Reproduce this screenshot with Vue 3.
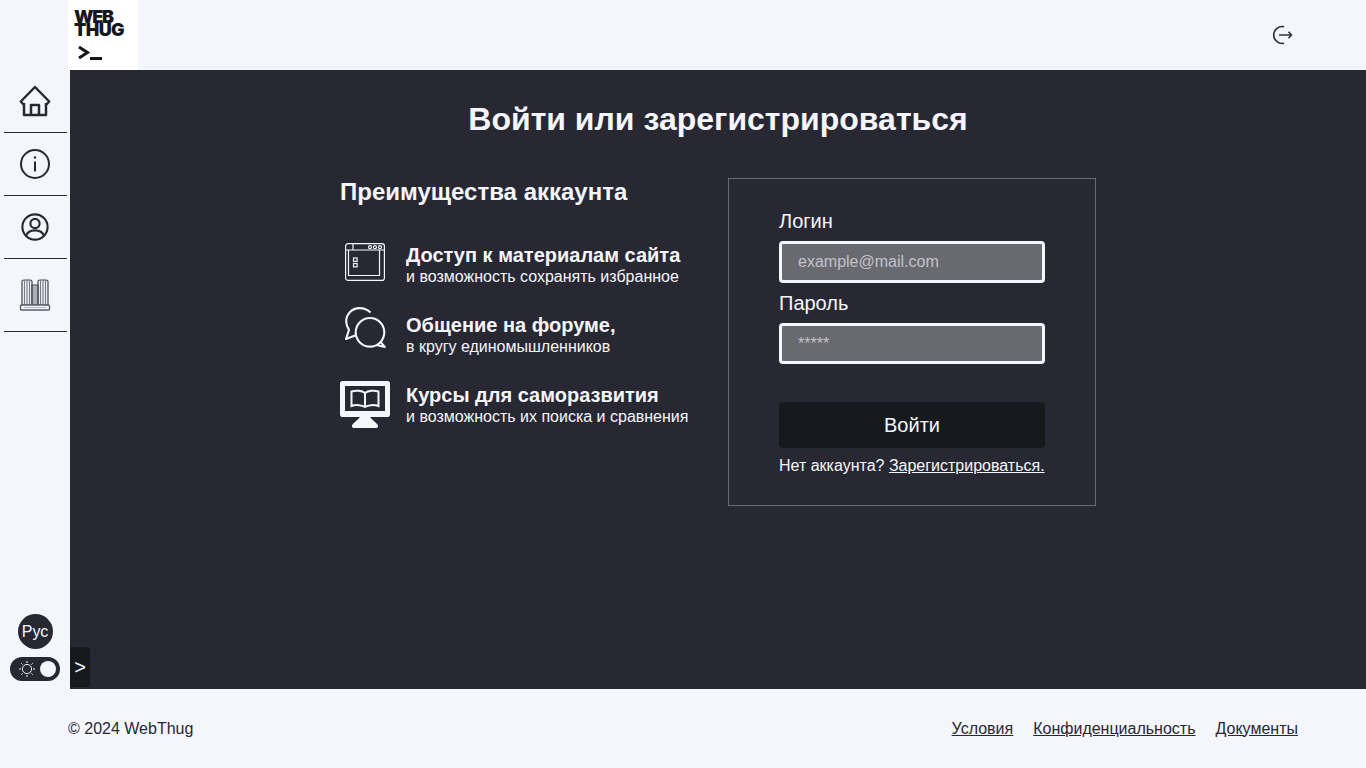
<script setup>
const benefits = [
  { title: 'Доступ к материалам сайта', text: 'и возможность сохранять избранное', icon: 'site' },
  { title: 'Общение на форуме,', text: 'в кругу единомышленников', icon: 'chat' },
  { title: 'Курсы для саморазвития', text: 'и возможность их поиска и сравнения', icon: 'book' }
]
</script>

<template>
  <div class="page">
    <header class="header">
      <div class="logo">
        <div class="logo-word web">WEB</div>
        <div class="logo-word thug">THUG</div>
        <svg class="logo-prompt" width="26" height="16" viewBox="0 0 26 16">
          <path d="M1 2 9.500 7.500 1 13" fill="none" stroke="#15171c" stroke-width="3"/>
          <path d="M12 13.500H24" stroke="#15171c" stroke-width="3"/>
        </svg>
      </div>
      <svg class="logout" width="22" height="22" viewBox="0 0 22 22" fill="none" stroke="#33333e" stroke-width="1.600">
        <path d="M12.500 2.600A8.500 8.500 0 1 0 12.500 19.400" stroke-linecap="round"/>
        <path d="M8 11H20.500M17.500 7.800 20.500 11 17.500 14.200"/>
      </svg>
    </header>

    <div class="middle">
      <aside class="sidebar">
        <nav class="nav">
          <div class="nav-item">
            <svg width="32" height="32" viewBox="0 0 32 32" fill="none" stroke="#282833" stroke-width="2.500">
              <path d="M5 20 1.800 16.500 16 2 30.200 16.500 27 20M5 18V30H27V18M12 30V20H20V30" stroke-linejoin="round"/>
            </svg>
          </div>
          <div class="nav-item">
            <svg width="32" height="32" viewBox="0 0 32 32" fill="none" stroke="#282833" stroke-width="2">
              <circle cx="16" cy="16" r="14"/>
              <path d="M16 13.500V23.500" stroke-width="2"/>
              <circle cx="16" cy="9.500" r="1.200" fill="#282833" stroke="none"/>
            </svg>
          </div>
          <div class="nav-item">
            <svg width="30" height="30" viewBox="0 0 30 30" fill="none" stroke="#282833" stroke-width="2.100">
              <circle cx="15" cy="15" r="12.600"/>
              <circle cx="15" cy="11.500" r="4.600"/>
              <path d="M6 24C7.500 19.500 11 18.400 15 18.400S22.500 19.500 24 24"/>
            </svg>
          </div>
          <div class="nav-item tall">
            <svg width="32" height="32" viewBox="0 0 32 32" fill="none" stroke="#282833" stroke-width="1">
              <g stroke="#44444f" stroke-width="1.200">
                <path d="M3 2.500C3 1 4 1 5 1H11C12 1 13 1 13 2.500V26H3Z"/>
                <path d="M19 2.500C19 1 20 1 21 1H27C28 1 29 1 29 2.500V26H19Z"/>
                <path d="M13 6H19V26H13Z"/>
                <path d="M5.500 1V26M8 1V26M10.500 1V26M21.500 1V26M24 1V26M26.500 1V26M15 6V26M17 6V26" stroke="#7c7c86"/>
              </g>
              <rect x="1.500" y="26" width="29" height="5" rx="1" stroke="#5c5c67" stroke-width="1.400" fill="#f4f6fc"/>
              <path d="M5 28.500H27" stroke="#b5b5bd"/>
            </svg>
          </div>
        </nav>
        <div class="controls">
          <div class="lang">Рус</div>
          <div class="theme">
            <svg width="18" height="18" viewBox="0 0 18 18" fill="none" stroke="#f4f6fc" stroke-width="1">
              <circle cx="9" cy="9" r="4.600"/>
              <path d="M9 1V3M9 15V17M1 9H3M15 9H17M3.300 3.300 4.600 4.600M13.400 13.400 14.700 14.700M3.300 14.700 4.600 13.400M13.400 4.600 14.700 3.300"/>
            </svg>
            <span class="knob"></span>
          </div>
        </div>
      </aside>

      <main class="main">
        <button class="toggle" type="button">&gt;</button>
        <h1 class="title">Войти или зарегистрироваться</h1>
        <div class="columns">
          <section class="benefits">
            <h2 class="benefits-title">Преимущества аккаунта</h2>
            <ul class="benefit-list">
              <li v-for="b in benefits" :key="b.title" class="benefit">
                <div :class="['benefit-icon', b.icon]">
                  <svg v-if="b.icon === 'site'" width="40" height="38" viewBox="0 0 40 38" fill="none" stroke="#f4f6fc" stroke-width="1.200">
                    <rect x="0.600" y="0.600" width="38.800" height="36.800" rx="2.500"/>
                    <path d="M0.600 7H39.400M8 0.600V7"/>
                    <circle cx="25" cy="4.200" r="1.500"/><circle cx="30" cy="4.200" r="1.500"/><circle cx="35" cy="4.200" r="1.500"/>
                    <path d="M3.500 7V32.500H34.500V7"/>
                    <rect x="8.500" y="15" width="3.600" height="3.400"/><rect x="8.500" y="20.500" width="3.600" height="3.400"/>
                  </svg>
                  <svg v-else-if="b.icon === 'chat'" width="42" height="42" viewBox="0 0 42 42" fill="none" stroke="#f4f6fc" stroke-width="2.100">
                    <path d="M25.500 5.500C22.500 2.500 19 1.100 14.500 1.100 7 1.100 1.200 7 1.200 14.500 1.200 17.500 2.500 20.500 4 23L1 32 10.800 28.200" stroke-linejoin="round"/>
                    <circle cx="25" cy="25.300" r="14.300"/>
                    <path d="M35.500 35 39.800 40 31.500 38" stroke-linejoin="round"/>
                  </svg>
                  <svg v-else width="50" height="48" viewBox="0 0 50 48" fill="none">
                    <path fill-rule="evenodd" d="M2.500 0H47.500A2.500 2.500 0 0 1 50 2.500V33.500A2.500 2.500 0 0 1 47.500 36H2.500A2.500 2.500 0 0 1 0 33.500V2.500A2.500 2.500 0 0 1 2.500 0ZM5 5V30H45V5Z" fill="#f4f6fc"/>
                    <path d="M20 36H30C32 39 37 42 38 44.500 38.500 46.500 37 47 35 47H15C13 47 11.500 46.500 12 44.500 13 42 18 39 20 36Z" fill="#f4f6fc"/>
                    <path d="M25 12C22 9.500 16 9 11.500 10.500V25C16 23.500 22 24 25 26 28 24 34 23.500 38.500 25V10.500C34 9 28 9.500 25 12ZM25 12V26" stroke="#f4f6fc" stroke-width="2"/>
                  </svg>
                </div>
                <div class="benefit-text">
                  <div class="benefit-title">{{ b.title }}</div>
                  <div class="benefit-sub">{{ b.text }}</div>
                </div>
              </li>
            </ul>
          </section>

          <form class="card" @submit.prevent>
            <label class="label" for="login">Логин</label>
            <input id="login" class="input" type="text" placeholder="example@mail.com">
            <label class="label second" for="pass">Пароль</label>
            <input id="pass" class="input short" type="password" placeholder="*****">
            <button class="submit" type="submit">Войти</button>
            <p class="register">Нет аккаунта? <a href="#">Зарегистрироваться.</a></p>
          </form>
        </div>
      </main>
    </div>

    <footer class="footer">
      <span>© 2024 WebThug</span>
      <div class="links">
        <a href="#">Условия</a>
        <a href="#">Конфиденциальность</a>
        <a href="#">Документы</a>
      </div>
    </footer>
  </div>
</template>

<style>
html, body { margin: 0; background: #f4f6fc; }
</style>

<style scoped>
* { box-sizing: border-box; }
.page {
  width: 1366px;
  height: 768px;
  display: flex;
  flex-direction: column;
  overflow: hidden;
  background: #f4f6fc;
  color: #282833;
  font-family: "Liberation Sans", Arial, sans-serif;
  will-change: opacity;
}
.header {
  height: 70px;
  flex: none;
  display: flex;
  align-items: center;
  justify-content: space-between;
  padding: 0 73px 0 68px;
}
.logo {
  width: 70px;
  height: 70px;
  background: #fff;
  padding: 10px 0 0 6px;
  display: flex;
  flex-direction: column;
}
.logo-word {
  font-family: Inter, "Liberation Sans", sans-serif;
  font-weight: 900;
  font-size: 18px;
  height: 14px;
  line-height: 13px;
  letter-spacing: -1.200px;
  color: #15171c;
  white-space: nowrap;
}
.logo-word.web { height: 13px; }
.logo-word.thug { letter-spacing: -0.600px; }
.logo-prompt { margin: 8px 0 0 4px; flex: none; }
.logout { display: block; }
.middle { flex: 1; display: flex; min-height: 0; }
.sidebar {
  width: 70px;
  flex: none;
  display: flex;
  flex-direction: column;
  justify-content: space-between;
}
.nav { display: flex; flex-direction: column; padding-left: 4px; width: 67px; }
.nav-item {
  height: 63px;
  border-bottom: 1px solid #282833;
  display: flex;
  align-items: center;
  justify-content: center;
}
.nav-item.tall { height: 73px; }
.nav-item svg { margin-left: -1px; }
.controls {
  display: flex;
  flex-direction: column;
  align-items: center;
  gap: 8px;
  padding-bottom: 8px;
}
.lang {
  width: 35px;
  height: 35px;
  border-radius: 50%;
  background: #282833;
  color: #f4f6fc;
  font-size: 16px;
  display: flex;
  align-items: center;
  justify-content: center;
}
.theme {
  width: 50px;
  height: 24px;
  border-radius: 12px;
  background: #282833;
  display: flex;
  align-items: center;
  justify-content: space-between;
  padding: 0 4px 0 8px;
}
.knob { width: 16px; height: 16px; border-radius: 50%; background: #f4f6fc; }
.main {
  flex: 1;
  position: relative;
  background: #282833;
  color: #f4f6fc;
  display: flex;
  flex-direction: column;
  align-items: center;
}
.toggle {
  position: absolute;
  left: 0;
  top: 577px;
  width: 20px;
  height: 40px;
  padding: 0;
  border: 0;
  border-radius: 0 3px 3px 0;
  background: #171a1d;
  color: #f4f6fc;
  font: 20px "Liberation Sans", Arial, sans-serif;
}
.title {
  margin: 30px 0 0;
  font-size: 32px;
  line-height: 38px;
  font-weight: 700;
  letter-spacing: 0;
  text-align: center;
}
.columns {
  display: flex;
  align-items: flex-start;
  gap: 40px;
  margin-top: 40px;
}
.benefits { width: 348px; }
.benefits-title {
  margin: 0;
  font-size: 24px;
  line-height: 28px;
  font-weight: 700;
}
.benefit-list { list-style: none; margin: 34px 0 0; padding: 0; }
.benefit { display: flex; align-items: flex-start; height: 50px; margin-bottom: 20px; }
.benefit-icon { width: 66px; flex: none; }
.benefit-icon svg { display: block; }
.benefit-icon.site { padding: 3px 0 0 5px; }
.benefit-icon.chat { margin-top: -3px; padding-left: 5px; }
.benefit-icon.book { padding-top: 1px; }
.benefit-text { padding-top: 4px; }
.benefit-title { font-size: 20px; line-height: 22px; font-weight: 700; white-space: nowrap; }
.benefit-sub { margin-top: 1px; font-size: 16px; line-height: 20px; white-space: nowrap; }
.card {
  width: 368px;
  height: 328px;
  border: 1px solid #6a6a75;
  padding: 30px 50px 0;
  display: flex;
  flex-direction: column;
}
.label { font-size: 20px; line-height: 24px; margin-bottom: 8px; }
.label.second { margin-top: 8px; }
.input {
  width: 266px;
  height: 42px;
  flex: none;
  border: 3px solid #f4f6fc;
  border-radius: 4px;
  background: #696971;
  padding: 0 16px;
  font: 16px "Liberation Sans", Arial, sans-serif;
  color: #f4f6fc;
  outline: none;
}
.input.short { height: 41px; }
.input::placeholder { color: #c2c2c8; opacity: 1; }
.submit {
  margin-top: 38px;
  width: 266px;
  height: 46px;
  flex: none;
  border: 0;
  border-radius: 4px;
  background: #171a1d;
  color: #f4f6fc;
  font: 20px "Liberation Sans", Arial, sans-serif;
}
.register { margin: 8px 0 0; font-size: 16px; line-height: 20px; white-space: nowrap; }
.register a { color: #f4f6fc; }
.footer {
  height: 79px;
  flex: none;
  display: flex;
  align-items: center;
  justify-content: space-between;
  padding: 0 68px;
  font-size: 16px;
}
.links { display: flex; gap: 20px; }
.links a { color: #282833; }
</style>
